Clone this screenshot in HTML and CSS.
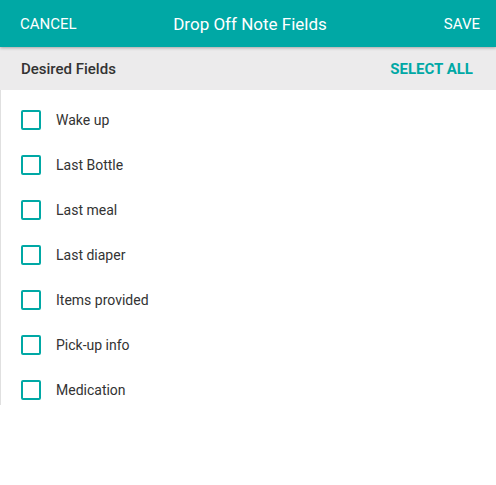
FILE: index.html
```html
<!DOCTYPE html>
<html>
<head>
<meta charset="utf-8">
<link rel="stylesheet" href="styles.css">
</head>
<body>
<header class="appbar">
  <span class="btn">CANCEL</span>
  <span class="title">Drop Off Note Fields</span>
  <span class="btn save">SAVE</span>
</header>
<div class="subbar">
  <span class="sub-title">Desired Fields</span>
  <span class="select-all">SELECT ALL</span>
</div>
<ul class="list">
  <li class="row"><span class="box"></span><span class="label">Wake up</span></li>
  <li class="row"><span class="box"></span><span class="label">Last Bottle</span></li>
  <li class="row"><span class="box"></span><span class="label">Last meal</span></li>
  <li class="row"><span class="box"></span><span class="label">Last diaper</span></li>
  <li class="row"><span class="box"></span><span class="label">Items provided</span></li>
  <li class="row"><span class="box"></span><span class="label">Pick-up info</span></li>
  <li class="row"><span class="box"></span><span class="label">Medication</span></li>
</ul>
</body>
</html>
```
FILE: styles.css
```css
html, body {
  margin: 0;
  padding: 0;
  background: #fff;
  font-family: Roboto, "Noto Sans", Arial, sans-serif;
}
.appbar {
  position: relative;
  z-index: 2;
  height: 47px;
  background: #00a8a5;
  color: #fff;
  display: flex;
  align-items: center;
  justify-content: space-between;
  padding: 0 16px 0 20px;
  box-shadow: 0 1px 3px rgba(0,0,0,0.3);
}
.btn {
  font-size: 15px;
  font-weight: 400;
}
.title {
  font-size: 17px;
  position: absolute;
  left: 4px;
  right: 0;
  text-align: center;
  pointer-events: none;
}
.subbar {
  height: 43px;
  background: #ecebec;
  display: flex;
  align-items: center;
  justify-content: space-between;
  padding: 0 23px 0 21px;
}
.sub-title {
  font-size: 15px;
  font-weight: 500;
  color: #333;
}
.select-all {
  font-size: 15px;
  font-weight: 700;
  color: #00a8a5;
}
.list {
  list-style: none;
  margin: 0;
  padding: 7px 0 0 0;
  height: 308px;
  overflow: hidden;
  border-left: 1px solid #e0e0e0;
}
.row {
  height: 45px;
  display: flex;
  align-items: center;
  padding-left: 20px;
}
.box {
  width: 16px;
  height: 16px;
  border: 2px solid #00a8a5;
  border-radius: 2px;
  margin-right: 15px;
}
.label {
  font-size: 14px;
  color: #333;
}
```
